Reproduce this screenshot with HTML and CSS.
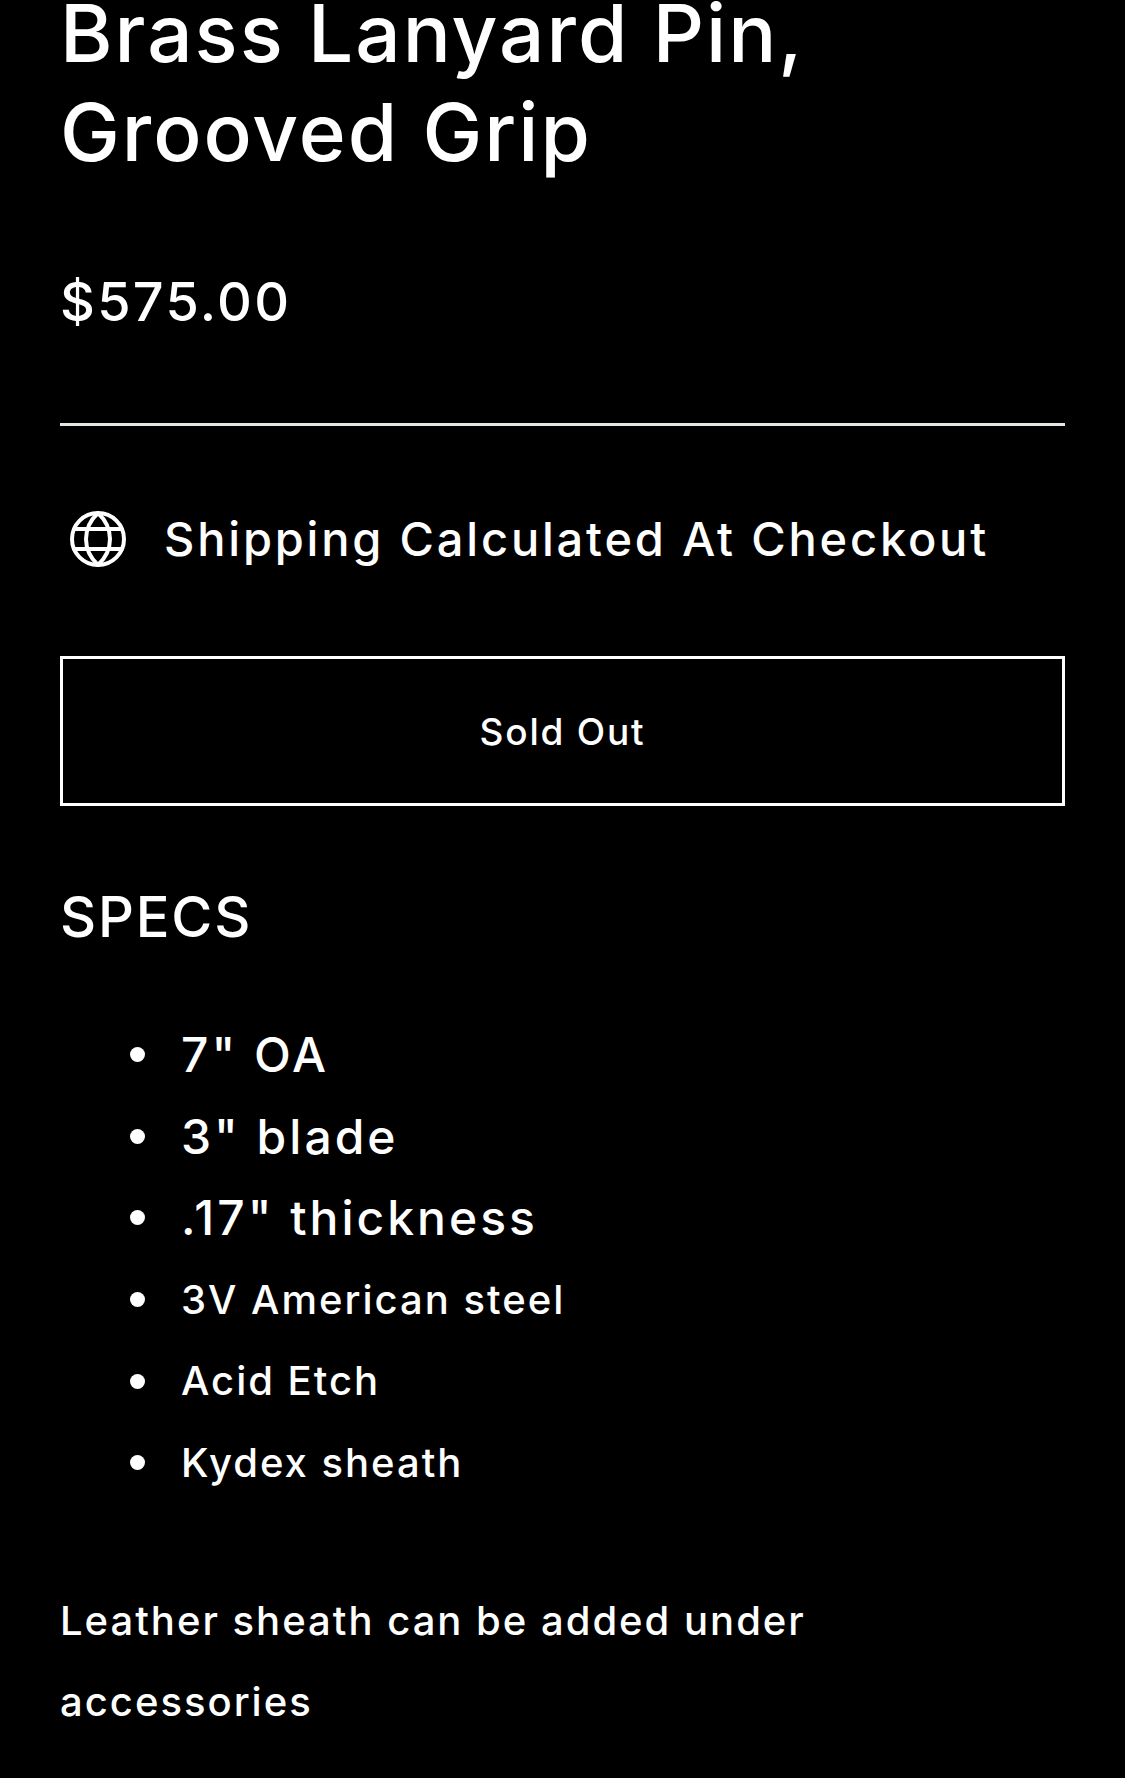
FILE: index.html
```html
<!DOCTYPE html>
<html lang="en">
<head>
<meta charset="utf-8">
<title>Brass Lanyard Pin, Grooved Grip</title>
<link rel="stylesheet" href="styles.css">
</head>
<body>
<main class="product">
  <h1 class="title">Brass Lanyard Pin,<br>Grooved Grip</h1>
  <p class="price">$575.00</p>
  <hr class="divider">
  <div class="shipping">
    <svg class="globe" viewBox="0 0 56 56" fill="none" stroke="currentColor" stroke-width="4" aria-hidden="true">
      <circle cx="28" cy="28" r="26"/>
      <path d="M28 2C12 17 12 39 28 54C44 39 44 17 28 2Z"/>
      <path d="M5 18H51M5 38H51"/>
    </svg>
    <span>Shipping Calculated At Checkout</span>
  </div>
  <button class="sold" type="button">Sold Out</button>
  <h2 class="specs">SPECS</h2>
  <ul class="list">
    <li class="big">7" OA</li>
    <li class="big">3" blade</li>
    <li class="big">.17" thickness</li>
    <li>3V American steel</li>
    <li>Acid Etch</li>
    <li>Kydex sheath</li>
  </ul>
  <p class="note">Leather sheath can be added under accessories</p>
</main>
</body>
</html>
```
FILE: styles.css
```css
* { box-sizing: border-box; }
html, body { margin: 0; background: #000; }
body { height: 1778px; overflow: hidden; color: #fff; font-family: Inter, "Liberation Sans", sans-serif; font-weight: 500; }
.product { padding: 0 60px; }
.title { margin: -17px 0 0; font-size: 80px; line-height: 99px; font-weight: 500; letter-spacing: 2px; }
.price { margin: 86px 0 0; font-size: 54px; line-height: 70px; letter-spacing: 2.300px; }
.divider { margin: 86px 0 0; border: 0; height: 3px; background: #e6e6e0; }
.shipping { display: flex; align-items: center; gap: 38px; margin-top: 78px; padding-left: 10px; font-size: 47px; line-height: 70px; letter-spacing: 2.800px; }
.globe { width: 56px; height: 56px; flex: none; }
.sold { display: block; width: 100%; height: 150px; margin-top: 82px; border: 3px solid #fff; background: transparent; color: #fff; font: inherit; font-size: 37px; letter-spacing: 1.800px; }
.specs { margin: 76px 0 0; font-size: 56px; line-height: 70px; font-weight: 500; letter-spacing: 1.800px; }
.list { margin: 62px 0 0; padding: 0 0 0 70px; list-style: none; font-size: 40px; line-height: 81.600px; letter-spacing: 2px; }
.list li { display: flex; align-items: center; }
.list li::before { content: ""; width: 15px; height: 15px; margin-right: 36px; border-radius: 50%; background: #fff; flex: none; }
.big { font-size: 48px; letter-spacing: 3px; }
.note { margin: 76px 0 0; font-size: 40px; line-height: 81.600px; letter-spacing: 2px; max-width: 800px; }
```
